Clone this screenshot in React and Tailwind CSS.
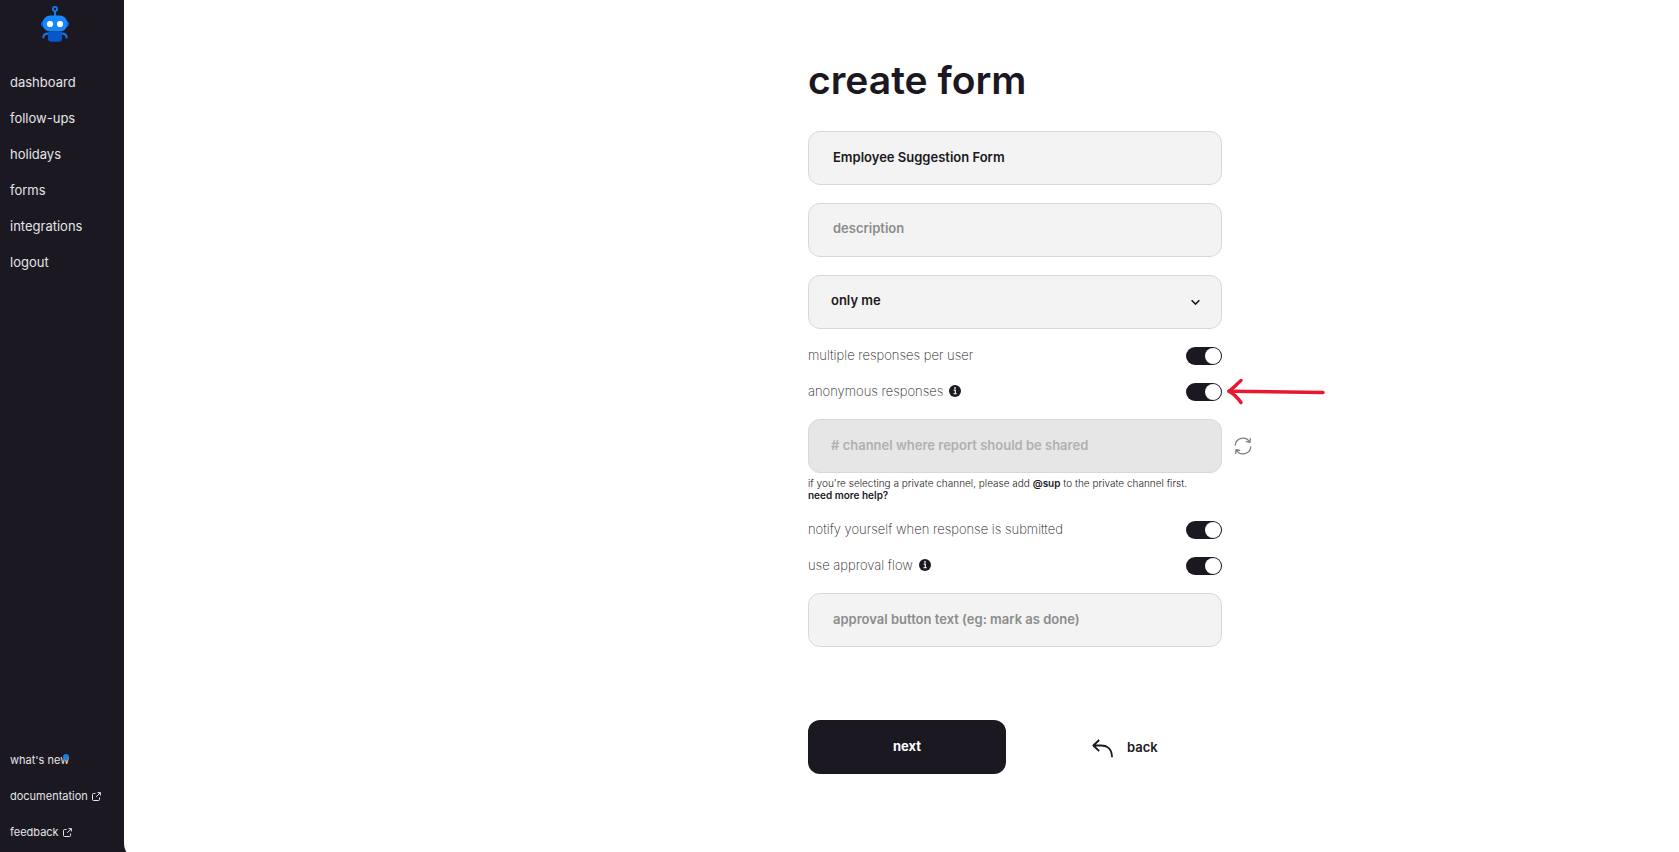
import React, { useState } from 'react';

const navLinks = ['dashboard', 'follow-ups', 'holidays', 'forms', 'integrations', 'logout'];

const RobotLogo = () => (
  <svg width="28" height="36" viewBox="0 0 28 36" aria-hidden="true">
    <path d="M14 5v6" stroke="#1479f0" strokeWidth="2" />
    <circle cx="14" cy="3" r="2.1" fill="none" stroke="#1479f0" strokeWidth="1.8" />
    <rect x="0" y="15" width="28" height="6" rx="2.5" fill="#0757c8" />
    <path d="M2.4 31.5c0-2.6 2-4 5-4M25.6 31.5c0-2.6-2-4-5-4" fill="none" stroke="#1479f0" strokeWidth="2" strokeLinecap="round" />
    <path d="M7 26h14v6.5a3.3 3.3 0 0 1-3.3 3.3h-7.4A3.3 3.3 0 0 1 7 32.500z" fill="#0757c8" />
    <rect x="1.5" y="9.5" width="25" height="16" rx="8" fill="#1688ff" />
    <circle cx="9" cy="18" r="3.1" fill="#fff" />
    <circle cx="19" cy="18" r="3.1" fill="#fff" />
  </svg>
);

const ExternalIcon = () => (
  <svg width="9" height="9" viewBox="0 0 9 9" fill="none" stroke="#e4e4e6" strokeWidth="1" aria-hidden="true">
    <path d="M3.5 1.5h-2a1 1 0 0 0-1 1v5a1 1 0 0 0 1 1h5a1 1 0 0 0 1-1v-2M5.5.6h2.9v2.9M8.3.7 4.2 4.8" />
  </svg>
);

const InfoIcon = () => (
  <svg width="12" height="12" viewBox="0 0 11 11" aria-hidden="true">
    <circle cx="5.5" cy="5.5" r="5.5" fill="#1b1821" />
    <path d="M4.3 4.7h1.5v3M4.1 8h3" fill="none" stroke="#fff" strokeWidth="1" />
    <circle cx="5.5" cy="2.7" r=".8" fill="#fff" />
  </svg>
);

const RefreshIcon = () => (
  <svg width="18" height="18" viewBox="0 0 18 18" fill="none" stroke="#7d7d7d" strokeWidth="1.3" strokeLinecap="round" strokeLinejoin="round" aria-hidden="true">
    <path d="M1.2 8.2A7.8 7.8 0 0 1 15.7 5M16.4 1.7 15.9 5.3 12.4 4.7" />
    <path d="M16.8 9.8A7.8 7.8 0 0 1 2.3 13M1.6 16.3 2.1 12.7 5.6 13.3" />
  </svg>
);

const BackIcon = () => (
  <svg width="21" height="19" viewBox="0 0 21 19" fill="none" stroke="#1b1821" strokeWidth="1.8" strokeLinejoin="round" aria-hidden="true">
    <path d="M7.2 1 1.3 6.5l5.9 5.7M1.3 6.5H9c7 0 11 4.5 11 11.8" />
  </svg>
);

const RedArrow = () => (
  <svg
    className="absolute left-full top-1/2 -translate-y-1/2 ml-1"
    width="100"
    height="28"
    viewBox="0 0 100 28"
    fill="none"
    stroke="#e8192f"
    strokeWidth="3.5"
    strokeLinecap="round"
    strokeLinejoin="round"
    aria-hidden="true"
  >
    <path d="M15 2.5C11 6 7 10.5 3 13.2c4.500 2.500 9 7 12 11.300" />
    <path d="M3 13.200 97 14.500" />
  </svg>
);

const boxClass = 'block h-[54px] w-full rounded-xl border border-[#d8d8d8] text-[13px] font-semibold placeholder:opacity-100';
const fieldClass = 'bg-[#f3f3f3] px-6 text-[#1b1821] placeholder:text-[#8c8c8c] outline-none';

const ToggleRow = ({ id, label, info, children }) => {
  const [on, setOn] = useState(true);
  return (
    <div className="relative flex h-[18px] items-center justify-between">
      <label htmlFor={id} className="flex items-center gap-1.5 pb-0.5 text-[13px] font-extralight leading-4 text-[#1b1821]">
        {label}
        {info && <InfoIcon />}
      </label>
      <input
        id={id}
        type="checkbox"
        role="switch"
        checked={on}
        onChange={(e) => setOn(e.target.checked)}
        className="h-[18px] w-9 cursor-pointer appearance-none rounded-full bg-[#b9b9b9] before:ml-px before:mt-px before:block before:h-4 before:w-4 before:rounded-full before:bg-white checked:bg-[#1b1821] checked:before:ml-[19px]"
      />
      {children}
    </div>
  );
};

const Sidebar = () => (
  <nav className="flex w-[124px] shrink-0 flex-col justify-between pl-2.5 text-[#e4e4e6]">
    <div>
      <a href="#home" aria-label="home" className="flex h-[65px] w-[90px] justify-center pt-1.5">
        <RobotLogo />
      </a>
      <ul className="text-[13px]">
        {navLinks.map((link) => (
          <li key={link}>
            <a href={`#${link}`} className="flex h-9 items-center">{link}</a>
          </li>
        ))}
      </ul>
    </div>
    <ul className="pb-0.5 text-[11px]">
      <li className="flex h-9 items-center">
        <a href="#whats-new" className="relative">
          what's new
          <span className="absolute right-0 top-0.5 h-1.5 w-1.5 rounded-full bg-[#1a7fdb]" />
        </a>
      </li>
      <li>
        <a href="#documentation" className="flex h-9 items-center gap-1">documentation <ExternalIcon /></a>
      </li>
      <li>
        <a href="#feedback" className="flex h-9 items-center gap-1">feedback <ExternalIcon /></a>
      </li>
    </ul>
  </nav>
);

const App = () => {
  const [name, setName] = useState('Employee Suggestion Form');

  return (
    <div className="flex h-screen overflow-hidden bg-[#1b1821] font-['Inter',sans-serif]">
      <Sidebar />
      <main className="grid h-[calc(100%+9px)] flex-1 grid-cols-[684fr_414px_457fr] rounded-bl-[18px] bg-white">
        <form className="col-start-2 pt-[60px] text-[#1b1821]" onSubmit={(e) => e.preventDefault()}>
          <h1 className="h-[71px] text-[39px] font-semibold leading-10">create form</h1>

          <div className="flex flex-col gap-[18px]">
            <input aria-label="form name" className={`${boxClass} ${fieldClass} pb-0.5`} value={name} onChange={(e) => setName(e.target.value)} />
            <input aria-label="description" className={`${boxClass} ${fieldClass} pb-1`} placeholder="description" />

            {/* Who can see the form */}
            <div className="relative">
              <select aria-label="visibility" className={`${boxClass} appearance-none bg-[#f3f3f3] px-[22px] pb-0.5 text-[#1b1821] outline-none`}>
                <option>only me</option>
              </select>
              <svg className="pointer-events-none absolute right-[22px] top-6" width="9" height="7" viewBox="0 0 9 7" fill="none" stroke="#1b1821" strokeWidth="1.6" aria-hidden="true">
                <path d="m.6 1.2 3.9 3.9 3.9-3.900" />
              </svg>
            </div>

            <ToggleRow id="multiple" label="multiple responses per user" />
            <ToggleRow id="anonymous" label="anonymous responses" info>
              <RedArrow />
            </ToggleRow>

            {/* Report channel */}
            <div>
              <div className="relative">
                <input
                  aria-label="channel"
                  disabled
                  className={`${boxClass} bg-[#e6e6e6] px-[22px] pb-0.5 placeholder:text-[#b0b0b0]`}
                  placeholder="# channel where report should be shared"
                />
                <button type="button" aria-label="refresh channels" className="absolute left-full top-[18px] ml-3">
                  <RefreshIcon />
                </button>
              </div>
              <p className="pb-0.5 pt-1 text-[10px] font-light leading-3 text-[#1b1821]">
                if you're selecting a private channel, please add <b className="font-semibold">@sup</b> to the private channel first.
                <a href="#help" className="block font-semibold">need more help?</a>
              </p>
            </div>

            <ToggleRow id="notify" label="notify yourself when response is submitted" />
            <ToggleRow id="approval" label="use approval flow" info />
            <input aria-label="approval button text" className={`${boxClass} ${fieldClass} pb-0.5`} placeholder="approval button text (eg: mark as done)" />
          </div>

          <div className="mt-[73px] flex items-center">
            <button type="submit" className="h-[54px] w-[198px] rounded-xl bg-[#1b1821] text-[13px] font-bold text-white">
              next
            </button>
            <button type="button" className="ml-[86px] flex items-center gap-3.5 pt-0.5 text-[13px] font-semibold">
              <BackIcon />
              back
            </button>
          </div>
        </form>
      </main>
    </div>
  );
};

export default App;
